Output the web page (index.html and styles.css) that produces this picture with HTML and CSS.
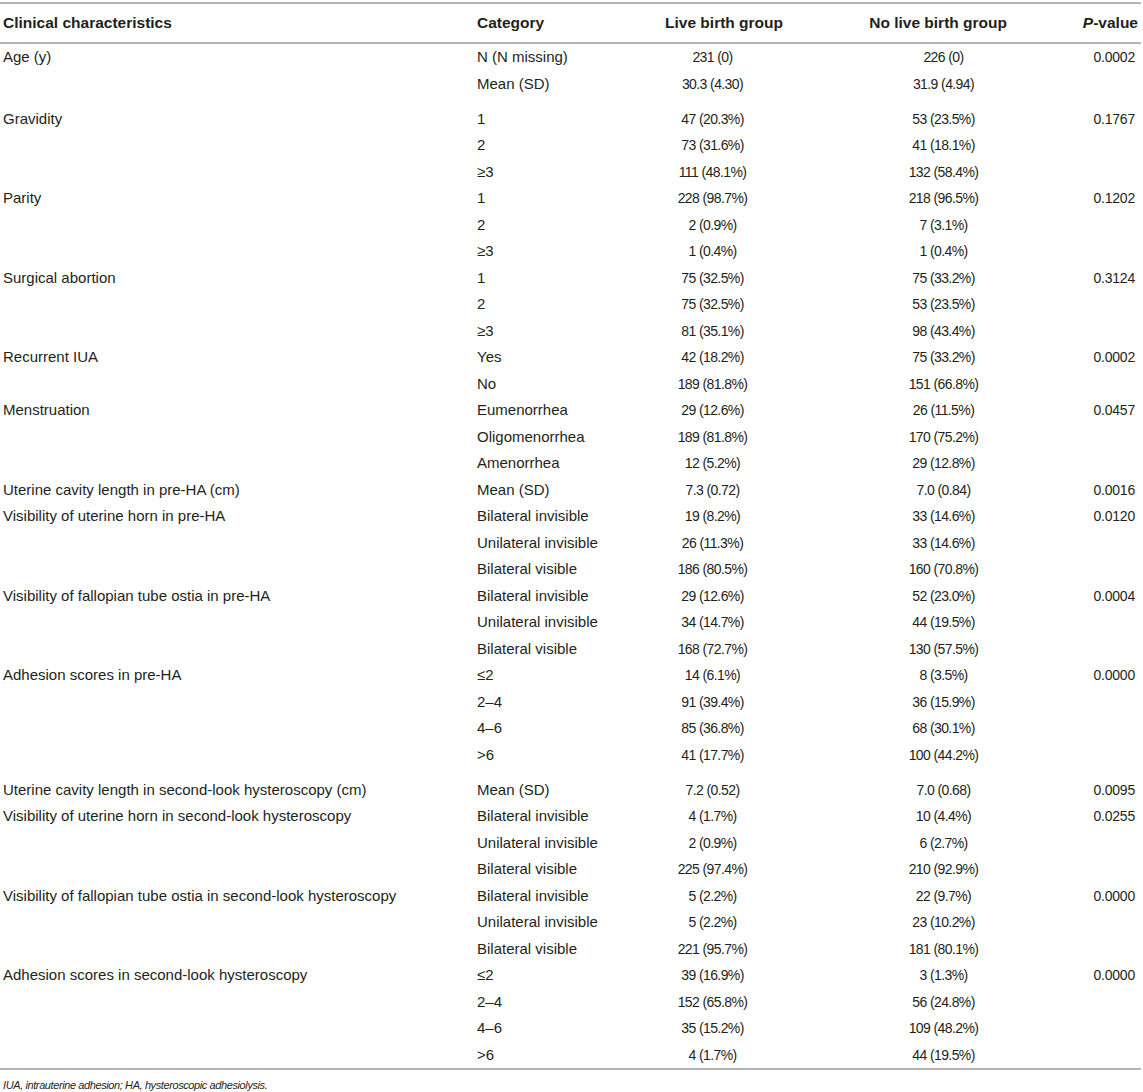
FILE: index.html
```html
<!DOCTYPE html>
<html>
<head>
<meta charset="utf-8">
<link rel="stylesheet" href="styles.css">
</head>
<body>
<div class="wrap">
<table class="tbl">
<colgroup>
<col class="c1"><col class="c2"><col class="c3"><col class="c4"><col class="c5">
</colgroup>
<thead>
<tr>
<th class="name">Clinical characteristics</th>
<th class="cat">Category</th>
<th class="live">Live birth group</th>
<th class="nolive">No live birth group</th>
<th class="pv"><i>P</i>-value</th>
</tr>
</thead>
<tbody>
<tr><td class="name">Age (y)</td><td class="cat">N (N missing)</td><td class="live">231 (0)</td><td class="nolive">226 (0)</td><td class="pv">0.0002</td></tr>
<tr><td class="name"></td><td class="cat">Mean (SD)</td><td class="live">30.3 (4.30)</td><td class="nolive">31.9 (4.94)</td><td class="pv"></td></tr>
<tr class="gap"><td class="name">Gravidity</td><td class="cat">1</td><td class="live">47 (20.3%)</td><td class="nolive">53 (23.5%)</td><td class="pv">0.1767</td></tr>
<tr><td class="name"></td><td class="cat">2</td><td class="live">73 (31.6%)</td><td class="nolive">41 (18.1%)</td><td class="pv"></td></tr>
<tr><td class="name"></td><td class="cat">≥3</td><td class="live">111 (48.1%)</td><td class="nolive">132 (58.4%)</td><td class="pv"></td></tr>
<tr><td class="name">Parity</td><td class="cat">1</td><td class="live">228 (98.7%)</td><td class="nolive">218 (96.5%)</td><td class="pv">0.1202</td></tr>
<tr><td class="name"></td><td class="cat">2</td><td class="live">2 (0.9%)</td><td class="nolive">7 (3.1%)</td><td class="pv"></td></tr>
<tr><td class="name"></td><td class="cat">≥3</td><td class="live">1 (0.4%)</td><td class="nolive">1 (0.4%)</td><td class="pv"></td></tr>
<tr><td class="name">Surgical abortion</td><td class="cat">1</td><td class="live">75 (32.5%)</td><td class="nolive">75 (33.2%)</td><td class="pv">0.3124</td></tr>
<tr><td class="name"></td><td class="cat">2</td><td class="live">75 (32.5%)</td><td class="nolive">53 (23.5%)</td><td class="pv"></td></tr>
<tr><td class="name"></td><td class="cat">≥3</td><td class="live">81 (35.1%)</td><td class="nolive">98 (43.4%)</td><td class="pv"></td></tr>
<tr><td class="name">Recurrent IUA</td><td class="cat">Yes</td><td class="live">42 (18.2%)</td><td class="nolive">75 (33.2%)</td><td class="pv">0.0002</td></tr>
<tr><td class="name"></td><td class="cat">No</td><td class="live">189 (81.8%)</td><td class="nolive">151 (66.8%)</td><td class="pv"></td></tr>
<tr><td class="name">Menstruation</td><td class="cat">Eumenorrhea</td><td class="live">29 (12.6%)</td><td class="nolive">26 (11.5%)</td><td class="pv">0.0457</td></tr>
<tr><td class="name"></td><td class="cat">Oligomenorrhea</td><td class="live">189 (81.8%)</td><td class="nolive">170 (75.2%)</td><td class="pv"></td></tr>
<tr><td class="name"></td><td class="cat">Amenorrhea</td><td class="live">12 (5.2%)</td><td class="nolive">29 (12.8%)</td><td class="pv"></td></tr>
<tr><td class="name">Uterine cavity length in pre-HA (cm)</td><td class="cat">Mean (SD)</td><td class="live">7.3 (0.72)</td><td class="nolive">7.0 (0.84)</td><td class="pv">0.0016</td></tr>
<tr><td class="name">Visibility of uterine horn in pre-HA</td><td class="cat">Bilateral invisible</td><td class="live">19 (8.2%)</td><td class="nolive">33 (14.6%)</td><td class="pv">0.0120</td></tr>
<tr><td class="name"></td><td class="cat">Unilateral invisible</td><td class="live">26 (11.3%)</td><td class="nolive">33 (14.6%)</td><td class="pv"></td></tr>
<tr><td class="name"></td><td class="cat">Bilateral visible</td><td class="live">186 (80.5%)</td><td class="nolive">160 (70.8%)</td><td class="pv"></td></tr>
<tr><td class="name">Visibility of fallopian tube ostia in pre-HA</td><td class="cat">Bilateral invisible</td><td class="live">29 (12.6%)</td><td class="nolive">52 (23.0%)</td><td class="pv">0.0004</td></tr>
<tr><td class="name"></td><td class="cat">Unilateral invisible</td><td class="live">34 (14.7%)</td><td class="nolive">44 (19.5%)</td><td class="pv"></td></tr>
<tr><td class="name"></td><td class="cat">Bilateral visible</td><td class="live">168 (72.7%)</td><td class="nolive">130 (57.5%)</td><td class="pv"></td></tr>
<tr><td class="name">Adhesion scores in pre-HA</td><td class="cat">≤2</td><td class="live">14 (6.1%)</td><td class="nolive">8 (3.5%)</td><td class="pv">0.0000</td></tr>
<tr><td class="name"></td><td class="cat">2–4</td><td class="live">91 (39.4%)</td><td class="nolive">36 (15.9%)</td><td class="pv"></td></tr>
<tr><td class="name"></td><td class="cat">4–6</td><td class="live">85 (36.8%)</td><td class="nolive">68 (30.1%)</td><td class="pv"></td></tr>
<tr><td class="name"></td><td class="cat">&gt;6</td><td class="live">41 (17.7%)</td><td class="nolive">100 (44.2%)</td><td class="pv"></td></tr>
<tr class="gap"><td class="name">Uterine cavity length in second-look hysteroscopy (cm)</td><td class="cat">Mean (SD)</td><td class="live">7.2 (0.52)</td><td class="nolive">7.0 (0.68)</td><td class="pv">0.0095</td></tr>
<tr><td class="name">Visibility of uterine horn in second-look hysteroscopy</td><td class="cat">Bilateral invisible</td><td class="live">4 (1.7%)</td><td class="nolive">10 (4.4%)</td><td class="pv">0.0255</td></tr>
<tr><td class="name"></td><td class="cat">Unilateral invisible</td><td class="live">2 (0.9%)</td><td class="nolive">6 (2.7%)</td><td class="pv"></td></tr>
<tr><td class="name"></td><td class="cat">Bilateral visible</td><td class="live">225 (97.4%)</td><td class="nolive">210 (92.9%)</td><td class="pv"></td></tr>
<tr><td class="name">Visibility of fallopian tube ostia in second-look hysteroscopy</td><td class="cat">Bilateral invisible</td><td class="live">5 (2.2%)</td><td class="nolive">22 (9.7%)</td><td class="pv">0.0000</td></tr>
<tr><td class="name"></td><td class="cat">Unilateral invisible</td><td class="live">5 (2.2%)</td><td class="nolive">23 (10.2%)</td><td class="pv"></td></tr>
<tr><td class="name"></td><td class="cat">Bilateral visible</td><td class="live">221 (95.7%)</td><td class="nolive">181 (80.1%)</td><td class="pv"></td></tr>
<tr><td class="name">Adhesion scores in second-look hysteroscopy</td><td class="cat">≤2</td><td class="live">39 (16.9%)</td><td class="nolive">3 (1.3%)</td><td class="pv">0.0000</td></tr>
<tr><td class="name"></td><td class="cat">2–4</td><td class="live">152 (65.8%)</td><td class="nolive">56 (24.8%)</td><td class="pv"></td></tr>
<tr><td class="name"></td><td class="cat">4–6</td><td class="live">35 (15.2%)</td><td class="nolive">109 (48.2%)</td><td class="pv"></td></tr>
<tr><td class="name"></td><td class="cat">&gt;6</td><td class="live">4 (1.7%)</td><td class="nolive">44 (19.5%)</td><td class="pv"></td></tr>
</tbody>
</table>
<p class="note">IUA, intrauterine adhesion; HA, hysteroscopic adhesiolysis.</p>
</div>
</body>
</html>
```
FILE: styles.css
```css
html, body {
  margin: 0;
  padding: 0;
  background: #ffffff;
}
body {
  font-family: "Liberation Sans", Arial, sans-serif;
  color: #231f20;
  font-size: 14px;
}
.wrap {
  width: 1141px;
  padding-top: 2px;
}
.tbl {
  width: 1141px;
  table-layout: fixed;
  border-collapse: collapse;
  border-top: 2px solid #b4b4b4;
  border-bottom: 2px solid #b4b4b4;
}
.c1 { width: 477px; }
.c2 { width: 163px; }
.c3 { width: 145px; }
.c4 { width: 225px; }
.c5 { width: 131px; }
.tbl th {
  font-weight: bold;
  font-size: 15.5px;
  height: 38px;
  padding: 0;
  vertical-align: middle;
  border-bottom: 2px solid #b4b4b4;
  white-space: nowrap;
}
.tbl td {
  line-height: 26.5px;
  padding: 0;
  vertical-align: middle;
  white-space: nowrap;
}
.tbl tr.gap td { padding-top: 8.5px; }
.tbl td.name, .tbl td.cat { font-size: 15px; }
.tbl td.live, .tbl td.nolive, .tbl td.pv { font-size: 14px; letter-spacing: -0.6px; }
.tbl td.pv { letter-spacing: -0.2px; }
.name { text-align: left; padding-left: 3px !important; }
.cat { text-align: left; }
th.live { text-align: right; padding-right: 2px !important; }
td.live { text-align: center; }
th.nolive { text-align: right; padding-right: 3px !important; }
td.nolive { text-align: center; padding-left: 92px !important; }
th.pv { text-align: right; padding-right: 3px !important; }
td.pv { text-align: right; padding-right: 6px !important; }
.note {
  margin: 9px 0 0 3px;
  font-size: 11px;
  letter-spacing: -0.4px;
  font-style: italic;
}
```
